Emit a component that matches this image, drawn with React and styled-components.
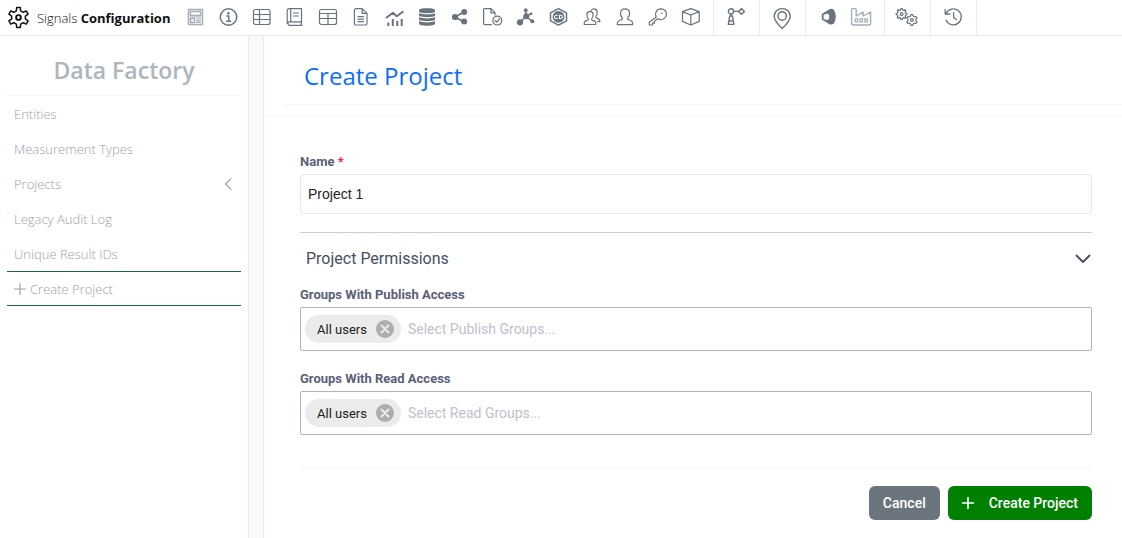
import { useState } from "react";
import styled, { createGlobalStyle } from "styled-components";

/* Styling */
const GlobalStyle = createGlobalStyle`
* {
  box-sizing: border-box;
}
body {
  margin: 0;
  background: #fff;
  font-family: Roboto, "Liberation Sans", sans-serif;
}
button, input {
  font-family: inherit;
}
`;
const Page = styled.div`
display: flex;
flex-direction: column;
min-height: 100vh;
`;
const TopBar = styled.header`
display: flex;
align-items: stretch;
height: 36px;
border-bottom: 1px solid #e9ebee;
`;
const Brand = styled.a`
display: flex;
flex: 0 0 173px;
align-items: center;
gap: 8px;
padding-left: 8px;
color: #111;
font-family: "Open Sans", "Noto Sans", sans-serif;
font-size: 13px;
font-weight: 300;
white-space: nowrap;
text-decoration: none;

svg {
  flex: none;
}
`;
const Strong = styled.strong`
font-weight: 700;
`;
const ToolGroup = styled.div`
display: flex;
padding: 0 6px;
border-right: 1px solid #e9ebee;
`;
const ToolButton = styled.button`
display: flex;
align-items: center;
justify-content: center;
width: 33px;
padding: 0;
border: 0;
background: none;
color: ${(props) => (props.$muted ? "#a3adb5" : "#69737e")};
cursor: pointer;
`;
const Glyph = styled.svg`
display: block;
overflow: visible;
fill: none;
stroke: currentColor;
stroke-width: 1.2;
stroke-linecap: round;
stroke-linejoin: round;
`;
const Body = styled.div`
display: flex;
flex: 1;
background: #f8f9fb;
`;
const Sidebar = styled.nav`
width: 249px;
padding: 0 7px;
border-right: 1px solid #e6e9ec;
background: #fff;
font-family: "Open Sans", "Noto Sans", sans-serif;
color: #adb5bd;
`;
const SideTitle = styled.h2`
margin: 0;
padding: 18px 0 9px;
border-bottom: 1px solid #f4f5f6;
font-size: 23px;
line-height: 32px;
font-weight: 600;
text-align: center;
`;
const SideList = styled.ul`
margin: 0;
padding: 0;
list-style: none;
`;
const SideLink = styled.a`
display: flex;
align-items: center;
gap: 4px;
height: 35px;
padding: 0 8px 0 7px;
border: solid ${(props) => (props.$active ? "#1c6347" : "transparent")};
border-width: 1px 0;
color: #99a3ad;
font-size: 13px;
font-weight: 300;
text-decoration: none;

svg:last-child {
  margin-left: auto;
}
`;
const Main = styled.main`
flex: 1;
margin-left: 14px;
border-left: 1px solid #e6e9ec;
background: #fff;
`;
const MainHeader = styled.div`
padding: 0 0 10px 20px;
border-bottom: 1px solid #f6f7f8;
`;
const PageTitle = styled.h1`
margin: 0;
padding: 24px 20px 12px;
border-bottom: 1px solid #f6f7f8;
color: #0d6efd;
font-family: "Open Sans", "Noto Sans", sans-serif;
font-size: 24px;
line-height: 32px;
font-weight: 400;
`;
const Form = styled.form`
padding: 37px 30px 18px 36px;
`;
const Label = styled.label`
display: block;
margin-bottom: 3px;
color: #5a6078;
font-size: 13px;
line-height: 18px;
font-weight: 700;
`;
const Required = styled.span`
color: #e5243f;
`;
const NameInput = styled.input`
display: block;
width: 100%;
height: 40px;
padding: 0 7px;
border: 1px solid #e4e6ef;
border-radius: 4px;
color: #212529;
font-family: "Liberation Sans", Arial, sans-serif;
font-size: 14px;
`;
const Section = styled.section`
margin-top: 18px;
border-top: 1px solid #ccced0;
`;
const SectionToggle = styled.button`
display: flex;
align-items: center;
justify-content: space-between;
width: 100%;
height: 51px;
margin-bottom: 2px;
padding: 0 1px 0 6px;
border: 0;
background: none;
color: #464e5f;
font-size: 16px;
cursor: pointer;
`;
const Field = styled.div`
margin-bottom: 19px;
`;
const TagBox = styled.div`
display: flex;
align-items: center;
gap: 7px;
height: 44px;
padding: 0 4px;
border: 1px solid #adb5bd;
border-radius: 2px;
`;
const Chip = styled.span`
display: flex;
align-items: center;
gap: 9px;
height: 28px;
padding: 0 7px 0 12px;
border-radius: 14px;
background: #ebebeb;
color: #212121;
font-size: 13px;
`;
const ChipRemove = styled.button`
display: flex;
align-items: center;
justify-content: center;
width: 18px;
height: 18px;
padding: 0;
border: 0;
border-radius: 50%;
background: #adadad;
color: #ebebeb;
cursor: pointer;
`;
const TagInput = styled.input`
flex: 1;
min-width: 0;
padding: 0;
border: 0;
outline: 0;
background: none;
font-size: 14px;

&::placeholder {
  color: #bfc0cb;
  opacity: 1;
}
`;
const Footer = styled.div`
display: flex;
justify-content: flex-end;
gap: 8px;
margin-top: 32px;
padding-top: 18px;
border-top: 1px solid #f4f5f6;
`;
const Button = styled.button`
display: flex;
align-items: center;
gap: 15px;
height: 34px;
padding: 0 14px;
border: 0;
border-radius: 6px;
background: ${(props) => (props.$primary ? "#008000" : "#6c757d")};
color: #fff;
font-size: 14px;
font-weight: 500;
cursor: pointer;
`;
/* Styling End */

const solid = { fill: "currentColor", stroke: "none" };

function gearPath(cx, cy, outer, inner, teeth) {
  const step = (Math.PI * 2) / teeth;
  const points = [];
  for (let i = 0; i < teeth; i++) {
    const a = i * step - Math.PI / 2;
    [[-0.3, inner], [-0.17, outer], [0.17, outer], [0.3, inner]].forEach(([t, r]) => {
      points.push(`${(cx + Math.cos(a + t * step) * r).toFixed(2)} ${(cy + Math.sin(a + t * step) * r).toFixed(2)}`);
    });
  }
  return `M${points.join("L")}Z`;
}

const icons = {
  form: <><rect x="2.5" y="1.5" width="14" height="15" strokeWidth="1.5" /><rect x="4.5" y="3.5" width="10" height="4" strokeWidth="1.4" /><rect x="4.5" y="10.5" width="4" height="4" strokeWidth="1.4" /><path d="M4.5 9H14.5M10.5 11H14.5M10.5 12.8H14.5M10.5 14.5H14.5" /></>,
  info: <><circle cx="9.5" cy="9" r="8.2" strokeWidth="1.5" /><circle cx="9.4" cy="5.2" r="1.2" {...solid} /><path d="M7.8 8H9.8V13M7.6 13.2H11.6" strokeWidth="1.5" /></>,
  table: <><rect x="1.5" y="1.5" width="16.5" height="15" rx="2" /><path d="M1.5 6.5H18M1.5 11.5H18M7.5 1.5V16.5" /></>,
  book: <><path d="M4 .7H16.5V13.8H4A2 2 0 0 0 4 17.3H17M2.2 15.5V2.5A1.8 1.8 0 0 1 4 .7M5.7 .7V13.8M16.2 13.8V17.3M8.5 5H13.5M8.5 8H13.5" /></>,
  grid: <><rect x="1.5" y="1.5" width="17" height="15" rx="2" /><path d="M1.5 5.5H18.5M1.5 10.5H18.5M10 5.5V16.5" /></>,
  doc: <path d="M11.2 .6H5A1.6 1.6 0 0 0 3.4 2.2V15.4A1.6 1.6 0 0 0 5 17H14.4A1.6 1.6 0 0 0 16 15.4V5.4L11.2 .6V5.4H16M7 8.7H12.5M7 11.2H12.5M7 13.6H12.5" />,
  chart: <><path d="M2.6 9.6L9 4.7L12.8 8.3L18.8 3.8" strokeWidth="1.9" /><path d="M4.3 14.5V18M8.8 11V18M13.3 13V18M17.7 11V18" strokeWidth="2" strokeLinecap="butt" /></>,
  database: <g {...solid}><path d="M2 2.4C2 .8 5 .2 10 .2S18 .8 18 2.4V3.2C18 4.4 15 5.2 10 5.2S2 4.4 2 3.2Z" /><path d="M2 5C4 6 7 6.4 10 6.4S16 6 18 5V7.3C18 8.5 15 9.2 10 9.2S2 8.5 2 7.3Z" /><path d="M2 9C4 10 7 10.4 10 10.4S16 10 18 9V11.3C18 12.5 15 13.2 10 13.2S2 12.5 2 11.3Z" /><path d="M2 13C4 14 7 14.4 10 14.4S16 14 18 13V15.5C18 17 15 17.7 10 17.7S2 17 2 15.5Z" /></g>,
  share: <><path d="M14 4L5 9L14 14" strokeWidth="1.8" /><g {...solid}><circle cx="14.2" cy="4" r="3" /><circle cx="5" cy="9" r="3.1" /><circle cx="14.2" cy="13.6" r="3" /></g></>,
  docCheck: <><path d="M12 7V4.6L8 .6H1.6Q.6 .6 .6 1.6V15.6Q.6 16.6 1.6 16.6H8.5M7.8 .6V4.8H12" /><circle cx="14.3" cy="12.6" r="4.4" /><path d="M12.2 12.7L13.8 14.2L16.5 11" /></>,
  molecule: <><path d="M9.5 2.5L10.3 8L4 14.5M10 8L16 13.2M10 8L15 6" strokeWidth="1.5" /><g {...solid}><circle cx="9.8" cy="2.2" r="1.9" /><circle cx="10.3" cy="8.2" r="3" /><circle cx="4" cy="14.3" r="3.1" /><circle cx="16.3" cy="13.3" r="2" /><circle cx="15.2" cy="5.8" r="1.3" /></g></>,
  hexagon: <><path d="M9.5 .6L17.5 4.8V12.8L9.5 17.2L1.5 12.8V4.8Z" strokeWidth="1.5" /><circle cx="9.5" cy="8.9" r="5.9" {...solid} /><path d="M8.4 7.3H7A1.6 1.6 0 0 0 7 10.5H8.4M10.4 7.3H11.8A1.6 1.6 0 0 1 11.8 10.5H10.4Z" stroke="#fff" strokeWidth="1.1" /></>,
  users: <><path d="M2.2 16.5Q1.8 13 5.2 12.4Q6.8 12 6.2 10.6Q4.7 9 4.9 6.4Q5.1 3.3 8 3.3T11.1 6.4Q11.3 9 9.8 10.6Q9.2 12 10.8 12.4Q14.2 13 13.8 16.5Z" /><path d="M9.3 2.2Q10.2 .6 12.4 .8Q15.3 1.2 15.2 4.4Q15.2 7 14 8.2Q13.4 9.8 15 10.2Q18 11 17.8 13.6H15.5" /></>,
  user: <path d="M2.3 16.6Q2 12.8 5.7 12Q8 11.5 7.2 9.7Q5.2 7.8 5.5 4.8Q5.8 .8 10 .8T14.5 4.8Q14.8 7.8 12.8 9.7Q12 11.5 14.3 12Q18 12.8 17.7 16.6Z" />,
  key: <><path d="M8.2 9.2L1.3 14V17H4.6V15.2H6.4V13.4L9.6 10.8Q12 12.2 15 11Q18.6 9.3 18.4 5.6Q17.8 1 13.2 .8Q9 .8 7.8 4.6Q7.2 7 8.2 9.2Z" /><circle cx="13.9" cy="5.2" r=".8" {...solid} /></>,
  cube: <path d="M9.8 .6L18.2 3.6V13.4L9.8 17L1.5 13.4V3.6ZM1.5 3.6L9.8 7L18.2 3.6M9.8 7V17" />,
  nodes: <><circle cx="4" cy="3.4" r="2.6" strokeWidth="1.4" /><path d="M6.7 3.4H11.6M14.5 .6L17.4 3.4L14.5 6.2L11.6 3.4ZM4 6V8M2.7 8H5.5L6.9 16.4H1.3ZM3 13H5" strokeWidth="1.4" /></>,
  pin: <><path d="M9.2 20.4Q1.2 13 1.2 8.2A8 7.6 0 0 1 17.2 8.2Q17.2 13 9.2 20.4Z" strokeWidth="1.4" /><circle cx="9.2" cy="8" r="4.2" strokeWidth="1.4" /></>,
  lens: <path fillRule="evenodd" d="M2.8 6L10.4 1.2Q12.6 .2 14.6 1.6Q16.8 4.6 16.8 8.8T14.6 15.8Q12.6 17.2 10.4 16.2L2.8 11.6ZM4.6 6.4V11.2H5.8L8 12.2L10.2 10.8V6.8L8 5.4L5.8 6.4Z" {...solid} />,
  factory: <><path d="M-.4 15.2V1.4Q-.4 .6 .6 .6H3.4Q4.2 .6 4.2 1.4V8L11 4.2V8L18.6 4V15.2Q18.6 17 16.8 17H1.4Q-.4 17-.4 15.2Z" strokeWidth="1.4" /><path d="M3.2 10.8H5.8V13.8H3.2ZM8 10.8H10.6V13.8H8ZM12.8 10.8H15.4V13.8H12.8Z" /></>,
  gears: <><path d={gearPath(3.6, 6, 5.4, 4.2, 8)} /><circle cx="3.6" cy="6" r="1.4" /><path d={gearPath(13.9, 12, 5.4, 4.1, 6)} /><circle cx="13.9" cy="12" r="1.4" /></>,
  history: <><path d="M2 5.5A8 8 0 1 1 2 12.2M1.2 1.6V6H5.8" strokeWidth="1.3" /><path d="M9.6 4.6V9.4L12.4 11.6" strokeWidth="1.3" /></>,
};

const toolGroups = [
  [
    ["form", "Templates"], ["info", "Information"], ["table", "Tables"], ["book", "Notebook"],
    ["grid", "Grid"], ["doc", "Documents"], ["chart", "Charts"], ["database", "Database"],
    ["share", "Share"], ["docCheck", "Approvals"], ["molecule", "Materials"], ["hexagon", "ChemDraw"],
    ["users", "Groups"], ["user", "Users"], ["key", "Security"], ["cube", "Inventory"],
  ],
  [["nodes", "Workflows"]],
  [["pin", "Locations"]],
  [["lens", "Analytics"], ["factory", "Data Factory"]],
  [["gears", "Settings"]],
  [["history", "History"]],
];

const links = ["Entities", "Measurement Types", "Projects", "Legacy Audit Log", "Unique Result IDs"];

const GroupField = ({ id, label, placeholder }) => {
  const [tags, setTags] = useState(["All users"]);

  return (
    <Field>
      <Label htmlFor={id}>{label}</Label>
      <TagBox>
        {tags.map((tag) => (
          <Chip key={tag}>
            {tag}
            <ChipRemove
              type="button"
              aria-label={`Remove ${tag}`}
              onClick={() => setTags(tags.filter((t) => t !== tag))}>
              <Glyph width="8" height="8" viewBox="0 0 8 8">
                <path d="M.5 .5L7.5 7.5M7.5 .5L.5 7.5" strokeWidth="2" />
              </Glyph>
            </ChipRemove>
          </Chip>
        ))}
        <TagInput id={id} type="text" placeholder={placeholder} />
      </TagBox>
    </Field>
  );
};

const App = () => {
  const [name, setName] = useState("Project 1");
  const [open, setOpen] = useState(true);

  return (
    <Page>
      <GlobalStyle />
      <TopBar>
        <Brand href="#">
          <Glyph width="21" height="21" viewBox="0 0 21 21">
            <path d={gearPath(10.5, 10.5, 10.2, 7, 6)} strokeWidth="1.5" />
            <circle cx="10.5" cy="10.5" r="2.4" strokeWidth="1.9" />
          </Glyph>
          <span>Signals <Strong>Configuration</Strong></span>
        </Brand>
        {toolGroups.map((group, i) => (
          <ToolGroup key={i}>
            {group.map(([icon, label]) => (
              <ToolButton
                key={icon}
                type="button"
                aria-label={label}
                $muted={icon === "form" || icon === "factory"}>
                <Glyph width="19" height="19" viewBox="0 0 19 19">{icons[icon]}</Glyph>
              </ToolButton>
            ))}
          </ToolGroup>
        ))}
      </TopBar>
      <Body>
        <Sidebar>
          <SideTitle>Data Factory</SideTitle>
          <SideList>
            {links.map((link) => (
              <li key={link}>
                <SideLink href="#">
                  {link}
                  {link === "Projects" && (
                    <Glyph width="9" height="12" viewBox="0 0 9 12">
                      <path d="M7 .8L1.5 6L7 11.2" />
                    </Glyph>
                  )}
                </SideLink>
              </li>
            ))}
            <li>
              <SideLink href="#" $active>
                <Glyph width="12" height="12" viewBox="0 0 12 12">
                  <path d="M6 .5V11.5M.5 6H11.5" />
                </Glyph>
                <span>Create Project</span>
              </SideLink>
            </li>
          </SideList>
        </Sidebar>
        <Main>
          <MainHeader>
            <PageTitle>Create Project</PageTitle>
          </MainHeader>
          <Form onSubmit={(e) => e.preventDefault()}>
            <Label htmlFor="name">Name <Required>*</Required></Label>
            <NameInput
              id="name"
              type="text"
              value={name}
              onChange={(e) => setName(e.target.value)}/>
            <Section>
              <SectionToggle type="button" aria-expanded={open} onClick={() => setOpen(!open)}>
                Project Permissions
                <Glyph width="16" height="10" viewBox="0 0 16 10">
                  <path d="M1.5 1.5L8 8L14.5 1.5" strokeWidth="1.8" />
                </Glyph>
              </SectionToggle>
              {open && (
                <>
                  <GroupField
                    id="publish"
                    label="Groups With Publish Access"
                    placeholder="Select Publish Groups..."/>
                  <GroupField
                    id="read"
                    label="Groups With Read Access"
                    placeholder="Select Read Groups..."/>
                </>
              )}
            </Section>
            <Footer>
              <Button type="button">Cancel</Button>
              <Button type="submit" $primary>
                <Glyph width="12" height="12" viewBox="0 0 12 12">
                  <path d="M6 .5V11.5M.5 6H11.5" strokeWidth="1.6" />
                </Glyph>
                Create Project
              </Button>
            </Footer>
          </Form>
        </Main>
      </Body>
    </Page>
  );
};

export default App;
